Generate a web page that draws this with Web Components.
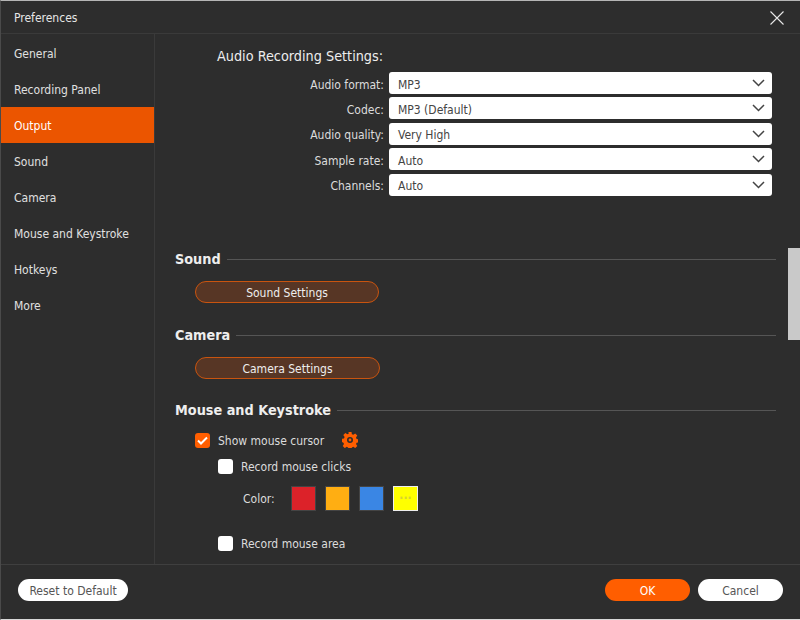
<!DOCTYPE html>
<html><head><meta charset="utf-8"><style>
html,body{margin:0;padding:0;background:#2d2d2d}
body{width:800px;height:620px;overflow:hidden;font-family:"DejaVu Sans Condensed","DejaVu Sans",sans-serif}
</style></head><body>
<pref-window>
<nav-item>General</nav-item><nav-item>Recording Panel</nav-item><nav-item active>Output</nav-item><nav-item>Sound</nav-item><nav-item>Camera</nav-item><nav-item>Mouse and Keystroke</nav-item><nav-item>Hotkeys</nav-item><nav-item>More</nav-item>
<div slot="main">
<audio-settings>
<select-row label="Audio format:" value="MP3"></select-row>
<select-row label="Codec:" value="MP3 (Default)"></select-row>
<select-row label="Audio quality:" value="Very High"></select-row>
<select-row label="Sample rate:" value="Auto"></select-row>
<select-row label="Channels:" value="Auto"></select-row>
</audio-settings>
<pref-section title="Sound"><outline-btn w="184">Sound Settings</outline-btn></pref-section>
<pref-section title="Camera" style="height:75px"><outline-btn w="185">Camera Settings</outline-btn></pref-section>
<pref-section title="Mouse and Keystroke"><mouse-options></mouse-options></pref-section>
</div>
<pill-btn slot="left" w="110">Reset to Default</pill-btn>
<pill-btn slot="right" w="85" primary>OK</pill-btn>
<pill-btn slot="right" w="85">Cancel</pill-btn>
</pref-window>
<script>
function def(name,html){customElements.define(name,class extends HTMLElement{connectedCallback(){if(this.shadowRoot)return;const r=this.attachShadow({mode:'open'});r.innerHTML=typeof html==='function'?html(this):html;}});}
const F='"DejaVu Sans Condensed","DejaVu Sans",sans-serif';
def('pref-window',`<style>
:host{display:flex;flex-direction:column;width:800px;height:620px;box-sizing:border-box;background:#2d2d2d;color:#e6e6e6;font:12px ${F};border-top:1px solid #b5b5b5;border-left:1px solid #4a4a4a;border-bottom:1px solid #d8d8d8;position:relative;overflow:hidden}
header{height:33px;box-sizing:border-box;flex:none;display:flex;align-items:center;justify-content:space-between;padding:1px 16px 0 13px;border-bottom:1px solid #3a3a3a;font-size:12px}
.body{flex:1;display:flex;min-height:0}
.side{width:154px;box-sizing:border-box;flex:none;border-right:1px solid #3a3a3a;padding-top:1px}
.main{flex:1;min-width:0;overflow:hidden}
footer{height:55px;box-sizing:border-box;flex:none;border-top:1px solid #3f3f3f;display:flex;justify-content:space-between;align-items:flex-start;padding:14px 17px 0 17px}
.r{display:flex;gap:8px}
.thumb{position:absolute;left:787px;top:247px;width:12px;height:92px;background:#c9c9c9}
svg{display:block}
</style>
<header><span>Preferences</span><svg width="14" height="14" viewBox="0 0 14 14"><path d="M.5.5l13 13M13.500.5l-13 13" stroke="#e8e8e8" stroke-width="1.100" fill="none"/></svg></header>
<div class="body"><div class="side"><slot></slot></div><div class="main"><slot name="main"></slot></div></div>
<footer><slot name="left"></slot><div class="r"><slot name="right"></slot></div></footer>
<div class="thumb"></div>`);
def('nav-item',e=>`<style>
:host{display:flex;align-items:center;height:36px;box-sizing:border-box;padding:2px 0 0 13px;font-size:12px;color:#e0e0e0;${e.hasAttribute('active')?'background:#eb5500;color:#fff;':''}}
</style><slot></slot>`);
def('audio-settings',`<style>
:host{display:block;height:216px;padding-left:62px;box-sizing:border-box}
h3{margin:0;padding-top:14px;height:24px;font:normal 14.300px/17px ${F};color:#eee}
.rows{display:flex;flex-direction:column;gap:3.400px}
</style><h3>Audio Recording Settings:</h3><div class="rows"><slot></slot></div>`);
def('select-row',e=>`<style>
:host{display:flex;align-items:center;height:22px;margin-left:-62px;font-size:12px}
.l{width:234px;text-align:right;color:#dcdcdc;padding:3px 5px 0 0;box-sizing:border-box}
.s{width:383px;height:22px;box-sizing:border-box;background:#fff;border-radius:3px;color:#444;display:flex;align-items:center;justify-content:space-between;padding:0 7px 0 9px}
.s span{padding-top:3px}
</style><span class="l">${e.getAttribute('label')}</span><div class="s"><span>${e.getAttribute('value')}</span><svg width="13" height="8" viewBox="0 0 13 8"><path d="M1 1l5.500 5.500L12 1" fill="none" stroke="#444" stroke-width="1.500"/></svg></div>`);
def('pref-section',e=>`<style>
:host{display:block;padding-left:20px;padding-right:24px;height:76px}
.h{display:flex;align-items:center;gap:6px;height:18px;font:bold 14.300px/18px ${F};color:#eee}
.h i{flex:1;height:1px;background:#555}
.c{margin-top:13px;padding-left:20px}
</style><div class="h"><span>${e.getAttribute('title')}</span><i></i></div><div class="c"><slot></slot></div>`);
def('outline-btn',e=>`<style>
:host{display:flex;align-items:center;justify-content:center;width:${e.getAttribute('w')}px;height:22px;box-sizing:border-box;padding-top:2px;background:#573625;border:1px solid #c9540f;border-radius:11px;font-size:12px;color:#eee}
</style><slot></slot>`);
def('pill-btn',e=>`<style>
:host{display:flex;align-items:center;justify-content:center;width:${e.getAttribute('w')}px;height:22px;box-sizing:border-box;padding-top:2px;border-radius:11px;font-size:12px;${e.hasAttribute('primary')?'background:#ff5e00;color:#fff;':'background:#fff;color:#555;'}}
</style><slot></slot>`);
def('mouse-options',`<style>
:host{display:block;margin-top:3px;font-size:12px;color:#dcdcdc}
.row{display:flex;align-items:center;gap:8px;height:16px}
.row span{padding-top:1px}
.cb{width:15px;height:15px;border-radius:3px;background:#fff;flex:none}
.on{background:#ff5e00;display:flex;align-items:center;justify-content:center}
.sub{margin-left:23px}
.gear{margin-left:10px}
.color{display:flex;align-items:center;margin:12px 0 0 48px;height:25px}
.color span{width:48px}
.color b{width:25px;height:25px;margin-right:9px;display:block;box-sizing:border-box;border:1px solid #444}
.color b.y{background:#ff0;border:1px solid #eee;color:#d6d230;font:bold 12px/22px ${F};text-align:center}
</style>
<div class="row"><div class="cb on"><svg width="11" height="9" viewBox="0 0 11 9"><path d="M1 4.500l3 3 6-6" fill="none" stroke="#fff" stroke-width="2"/></svg></div><span>Show mouse cursor</span>
<svg class="gear" width="16" height="16" viewBox="0 0 16 16"><path fill="#ff5e00" fill-rule="evenodd" d="M6.500 0h3l.4 2.200 1.400.6L13.200 1.500l2.100 2.100-1.300 1.900.6 1.400 2.200.4v3l-2.200.4-.6 1.400 1.300 1.900-2.100 2.100-1.900-1.300-1.400.6-.4 2.200h-3l-.4-2.200-1.400-.6-1.900 1.300-2.100-2.100 1.300-1.900-.6-1.400L-.2 9.800v-3l2.200-.4.6-1.400-1.300-1.900 2.100-2.100 1.900 1.300 1.400-.6zM8 5a3 3 0 100 6 3 3 0 000-6z"/><circle cx="8" cy="8" r="1.400" fill="#ff5e00"/></svg></div>
<div class="row sub" style="margin-top:10px"><div class="cb"></div><span>Record mouse clicks</span></div>
<div class="color"><span>Color:</span><b style="background:#dc2229"></b><b style="background:#ffae12"></b><b style="background:#3a86e4"></b><b class="y">···</b></div>
<div class="row sub" style="margin-top:24px"><div class="cb"></div><span>Record mouse area</span></div>`);
</script>
</body></html>
